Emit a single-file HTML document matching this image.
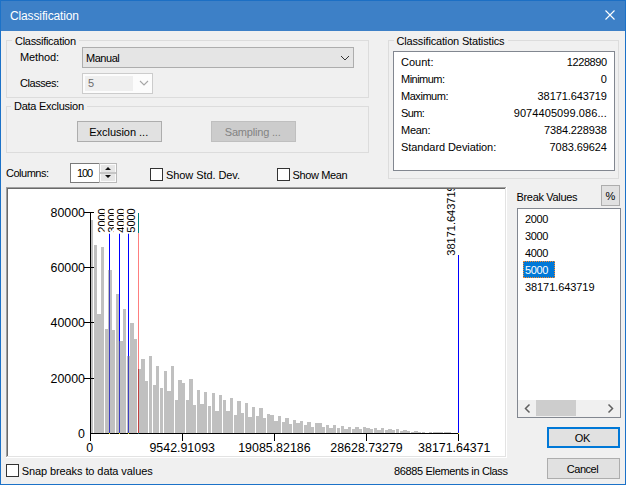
<!DOCTYPE html>
<html><head><meta charset="utf-8"><style>
html,body{margin:0;padding:0;}
body{width:626px;height:485px;position:relative;overflow:hidden;background:#f0f0f0;font-family:"Liberation Sans",sans-serif;}
body>div,body>svg{position:absolute;}
.t{white-space:nowrap;line-height:0;height:0;}
.t span{display:inline-block;line-height:0;}
svg text{font-family:"Liberation Sans",sans-serif;fill:#000;}
</style></head><body>
<div style="left:0px;top:0px;width:626px;height:31px;background:#3d80c7;"></div><div style="left:0px;top:0px;width:626px;height:1px;background:#1c6fc4;"></div><div style="left:0px;top:0px;width:1px;height:485px;background:#1c72c8;"></div><div style="left:625px;top:0px;width:1px;height:485px;background:#1c72c8;"></div><div style="left:0px;top:484px;width:626px;height:1px;background:#1c72c8;"></div><div class="t" style="top:16px;font-size:12px;color:#fff;letter-spacing:-0.130px;left:10px;"><span>Classification</span></div><svg style="left:604px;top:9px" width="13" height="13"><path d="M1.5 1.5 L10.5 10.5 M10.5 1.5 L1.5 10.5" stroke="#fff" stroke-width="1.1" fill="none"/></svg><div style="left:6px;top:40px;width:363px;height:58px;border:1px solid #dcdcdc;box-sizing:border-box;"></div><div style="left:12px;top:39px;width:67px;height:3px;background:#f0f0f0;"></div><div class="t" style="top:41px;font-size:11px;color:#000;letter-spacing:-0.293px;left:15px;"><span>Classification</span></div><div class="t" style="top:57px;font-size:11px;color:#000;letter-spacing:-0.124px;left:20px;"><span>Method:</span></div><div style="left:82px;top:47px;width:272px;height:21px;background:#e5e5e5;border:1px solid #adadad;box-sizing:border-box;"></div><div class="t" style="top:58px;font-size:11px;color:#000;letter-spacing:-0.456px;left:86px;"><span>Manual</span></div><svg style="left:340px;top:55px" width="11" height="7"><path d="M1 1 L5 5 L9 1" stroke="#333" stroke-width="1" fill="none"/></svg><div class="t" style="top:83px;font-size:11px;color:#000;letter-spacing:-0.454px;left:20px;"><span>Classes:</span></div><div style="left:82px;top:73px;width:71px;height:21px;background:#fcfcfc;border:1px solid #cccccc;box-sizing:border-box;"></div><div style="left:85px;top:76px;width:48px;height:15px;background:#efefef;"></div><div class="t" style="top:83px;font-size:11px;color:#6d6d6d;left:88px;"><span>5</span></div><svg style="left:139px;top:80px" width="11" height="7"><path d="M1 1 L5 5 L9 1" stroke="#a6a6a6" stroke-width="1.1" fill="none"/></svg><div style="left:6px;top:106px;width:363px;height:47px;border:1px solid #dcdcdc;box-sizing:border-box;"></div><div style="left:11px;top:105px;width:76px;height:3px;background:#f0f0f0;"></div><div class="t" style="top:106px;font-size:11px;color:#000;letter-spacing:-0.259px;left:14px;"><span>Data Exclusion</span></div><div style="left:77px;top:121px;width:85px;height:21px;background:#e1e1e1;border:1px solid #adadad;box-sizing:border-box;"></div><div class="t" style="top:132px;font-size:11px;color:#000;letter-spacing:-0.025px;left:89.21px;"><span>Exclusion ...</span></div><div style="left:211px;top:121px;width:85px;height:21px;background:#cccccc;border:1px solid #bfbfbf;box-sizing:border-box;"></div><div class="t" style="top:132px;font-size:11px;color:#838383;letter-spacing:-0.189px;left:224.79px;"><span>Sampling ...</span></div><div style="left:388px;top:40px;width:231px;height:139px;border:1px solid #dcdcdc;box-sizing:border-box;"></div><div style="left:393.5px;top:39px;width:114px;height:3px;background:#f0f0f0;"></div><div class="t" style="top:41px;font-size:11px;color:#000;letter-spacing:-0.161px;left:396.5px;"><span>Classification Statistics</span></div><div style="left:393px;top:51px;width:222px;height:120px;background:#fff;border:1px solid #828790;box-sizing:border-box;"></div><div class="t" style="top:62px;font-size:11px;color:#000;letter-spacing:0.018px;left:401px;"><span>Count:</span></div><div class="t" style="top:62px;font-size:11px;color:#000;letter-spacing:-0.387px;left:566.69px;"><span>1228890</span></div><div class="t" style="top:79px;font-size:11px;color:#000;letter-spacing:-0.524px;left:401px;"><span>Minimum:</span></div><div class="t" style="top:79px;font-size:11px;color:#000;left:600.68px;"><span>0</span></div><div class="t" style="top:96px;font-size:11px;color:#000;letter-spacing:-0.461px;left:401px;"><span>Maximum:</span></div><div class="t" style="top:96px;font-size:11px;color:#000;letter-spacing:-0.096px;left:537.60px;"><span>38171.643719</span></div><div class="t" style="top:113px;font-size:11px;color:#000;letter-spacing:-0.625px;left:401px;"><span>Sum:</span></div><div class="t" style="top:113px;font-size:11px;color:#000;letter-spacing:0.078px;left:513.72px;"><span>9074405099.086...</span></div><div class="t" style="top:130px;font-size:11px;color:#000;letter-spacing:-0.268px;left:401px;"><span>Mean:</span></div><div class="t" style="top:130px;font-size:11px;color:#000;letter-spacing:-0.123px;left:543.92px;"><span>7384.228938</span></div><div class="t" style="top:147px;font-size:11px;color:#000;letter-spacing:-0.079px;left:401px;"><span>Standard Deviation:</span></div><div class="t" style="top:147px;font-size:11px;color:#000;letter-spacing:-0.091px;left:549.59px;"><span>7083.69624</span></div><div class="t" style="top:173px;font-size:11px;color:#000;letter-spacing:-0.494px;left:6px;"><span>Columns:</span></div><div style="left:70px;top:163px;width:47px;height:20px;background:#fff;border:1px solid #7a7a7a;box-sizing:border-box;border-right:none;"></div><div style="left:99px;top:163px;width:18px;height:20px;background:#fff;border:1px solid #b9b9b9;box-sizing:border-box;"></div><div class="t" style="top:173px;font-size:11px;color:#000;letter-spacing:-1.177px;left:77px;"><span>100</span></div><div style="left:100px;top:164px;width:16px;height:18px;background:#fbfbfb;"></div><div style="left:101px;top:165px;width:14px;height:7px;background:#e6e6e6;"></div><div style="left:101px;top:174px;width:14px;height:7px;background:#e6e6e6;"></div><div style="left:100px;top:172px;width:16px;height:2px;background:#c6c6c6;"></div><svg style="left:100px;top:164px" width="16" height="18"><path d="M5 6 L8 3 L11 6 Z M5 11 L8 14 L11 11 Z" fill="#111"/></svg><div style="left:150px;top:168px;width:13px;height:13px;background:#fff;border:1px solid #333;box-sizing:border-box;"></div><div class="t" style="top:175px;font-size:11px;color:#000;letter-spacing:-0.077px;left:166px;"><span>Show Std. Dev.</span></div><div style="left:277px;top:168px;width:13px;height:13px;background:#fff;border:1px solid #333;box-sizing:border-box;"></div><div class="t" style="top:175px;font-size:11px;color:#000;letter-spacing:-0.386px;left:292.5px;"><span>Show Mean</span></div><div style="left:6px;top:187px;width:501px;height:271px;background:#fff;"></div><div style="left:6px;top:187px;width:501px;height:1px;background:#a0a0a0;"></div><div style="left:6px;top:188px;width:500px;height:1px;background:#696969;"></div><div style="left:6px;top:187px;width:1px;height:271px;background:#a0a0a0;"></div><div style="left:7px;top:188px;width:1px;height:269px;background:#696969;"></div><div style="left:6px;top:457px;width:501px;height:1px;background:#ffffff;"></div><div style="left:7px;top:456px;width:499px;height:1px;background:#e3e3e3;"></div><div style="left:506px;top:187px;width:1px;height:271px;background:#ffffff;"></div><div style="left:505px;top:188px;width:1px;height:269px;background:#e3e3e3;"></div><svg style="left:0;top:0" width="626" height="485"><defs><clipPath id="cp"><rect x="8" y="189" width="497" height="267"/></clipPath></defs><g clip-path="url(#cp)"><g shape-rendering="crispEdges"><rect x="91" y="220" width="2" height="213" fill="#c0c0c0"/><rect x="94" y="245" width="3" height="188" fill="#c0c0c0"/><rect x="97" y="314" width="4" height="119" fill="#c0c0c0"/><rect x="101" y="247" width="3" height="186" fill="#c0c0c0"/><rect x="105" y="329" width="3" height="104" fill="#c0c0c0"/><rect x="108" y="270" width="4" height="163" fill="#c0c0c0"/><rect x="112" y="330" width="3" height="103" fill="#c0c0c0"/><rect x="116" y="294" width="3" height="139" fill="#c0c0c0"/><rect x="119" y="341" width="4" height="92" fill="#c0c0c0"/><rect x="123" y="309" width="3" height="124" fill="#c0c0c0"/><rect x="127" y="356" width="3" height="77" fill="#c0c0c0"/><rect x="130" y="323" width="4" height="110" fill="#c0c0c0"/><rect x="134" y="339" width="3" height="94" fill="#c0c0c0"/><rect x="138" y="369" width="3" height="64" fill="#c0c0c0"/><rect x="141" y="359" width="4" height="74" fill="#c0c0c0"/><rect x="145" y="381" width="3" height="52" fill="#c0c0c0"/><rect x="149" y="356" width="3" height="77" fill="#c0c0c0"/><rect x="153" y="385" width="3" height="48" fill="#c0c0c0"/><rect x="156" y="366" width="3" height="67" fill="#c0c0c0"/><rect x="160" y="388" width="3" height="45" fill="#c0c0c0"/><rect x="164" y="371" width="3" height="62" fill="#c0c0c0"/><rect x="167" y="391" width="4" height="42" fill="#c0c0c0"/><rect x="171" y="366" width="3" height="67" fill="#c0c0c0"/><rect x="175" y="400" width="3" height="33" fill="#c0c0c0"/><rect x="178" y="380" width="4" height="53" fill="#c0c0c0"/><rect x="182" y="383" width="3" height="50" fill="#c0c0c0"/><rect x="186" y="400" width="3" height="33" fill="#c0c0c0"/><rect x="189" y="379" width="4" height="54" fill="#c0c0c0"/><rect x="193" y="405" width="3" height="28" fill="#c0c0c0"/><rect x="197" y="390" width="3" height="43" fill="#c0c0c0"/><rect x="200" y="404" width="4" height="29" fill="#c0c0c0"/><rect x="204" y="392" width="3" height="41" fill="#c0c0c0"/><rect x="208" y="406" width="3" height="27" fill="#c0c0c0"/><rect x="212" y="393" width="3" height="40" fill="#c0c0c0"/><rect x="215" y="411" width="4" height="22" fill="#c0c0c0"/><rect x="219" y="395" width="3" height="38" fill="#c0c0c0"/><rect x="223" y="400" width="3" height="33" fill="#c0c0c0"/><rect x="226" y="411" width="4" height="22" fill="#c0c0c0"/><rect x="230" y="398" width="3" height="35" fill="#c0c0c0"/><rect x="234" y="415" width="3" height="18" fill="#c0c0c0"/><rect x="237" y="401" width="4" height="32" fill="#c0c0c0"/><rect x="241" y="413" width="3" height="20" fill="#c0c0c0"/><rect x="245" y="403" width="3" height="30" fill="#c0c0c0"/><rect x="248" y="417" width="4" height="16" fill="#c0c0c0"/><rect x="252" y="407" width="3" height="26" fill="#c0c0c0"/><rect x="256" y="416" width="3" height="17" fill="#c0c0c0"/><rect x="259" y="408" width="4" height="25" fill="#c0c0c0"/><rect x="263" y="418" width="3" height="15" fill="#c0c0c0"/><rect x="267" y="414" width="3" height="19" fill="#c0c0c0"/><rect x="270" y="415" width="4" height="18" fill="#c0c0c0"/><rect x="274" y="421" width="4" height="12" fill="#c0c0c0"/><rect x="278" y="416" width="3" height="17" fill="#c0c0c0"/><rect x="282" y="422" width="3" height="11" fill="#c0c0c0"/><rect x="285" y="418" width="4" height="15" fill="#c0c0c0"/><rect x="289" y="424" width="3" height="9" fill="#c0c0c0"/><rect x="293" y="420" width="3" height="13" fill="#c0c0c0"/><rect x="296" y="423" width="4" height="10" fill="#c0c0c0"/><rect x="300" y="421" width="3" height="12" fill="#c0c0c0"/><rect x="304" y="425" width="3" height="8" fill="#c0c0c0"/><rect x="307" y="422" width="4" height="11" fill="#c0c0c0"/><rect x="311" y="427" width="3" height="6" fill="#c0c0c0"/><rect x="315" y="423" width="3" height="10" fill="#c0c0c0"/><rect x="318" y="423" width="4" height="10" fill="#c0c0c0"/><rect x="322" y="427" width="3" height="6" fill="#c0c0c0"/><rect x="326" y="425" width="3" height="8" fill="#c0c0c0"/><rect x="329" y="428" width="4" height="5" fill="#c0c0c0"/><rect x="333" y="425" width="3" height="8" fill="#c0c0c0"/><rect x="337" y="428" width="3" height="5" fill="#c0c0c0"/><rect x="341" y="426" width="3" height="7" fill="#c0c0c0"/><rect x="344" y="429" width="4" height="4" fill="#c0c0c0"/><rect x="348" y="427" width="3" height="6" fill="#c0c0c0"/><rect x="352" y="429" width="3" height="4" fill="#c0c0c0"/><rect x="355" y="427" width="4" height="6" fill="#c0c0c0"/><rect x="359" y="429" width="3" height="4" fill="#c0c0c0"/><rect x="363" y="427" width="3" height="6" fill="#c0c0c0"/><rect x="366" y="428" width="4" height="5" fill="#c0c0c0"/><rect x="370" y="429" width="3" height="4" fill="#c0c0c0"/><rect x="374" y="428" width="3" height="5" fill="#c0c0c0"/><rect x="377" y="430" width="4" height="3" fill="#c0c0c0"/><rect x="381" y="428" width="3" height="5" fill="#c0c0c0"/><rect x="385" y="430" width="3" height="3" fill="#c0c0c0"/><rect x="388" y="429" width="4" height="4" fill="#c0c0c0"/><rect x="392" y="430" width="3" height="3" fill="#c0c0c0"/><rect x="396" y="429" width="3" height="4" fill="#c0c0c0"/><rect x="400" y="431" width="3" height="2" fill="#c0c0c0"/><rect x="403" y="430" width="4" height="3" fill="#c0c0c0"/><rect x="407" y="431" width="3" height="2" fill="#c0c0c0"/><rect x="411" y="432" width="3" height="1" fill="#c0c0c0"/><rect x="414" y="431" width="4" height="2" fill="#c0c0c0"/><rect x="418" y="432" width="3" height="1" fill="#c0c0c0"/><rect x="422" y="432" width="3" height="1" fill="#c0c0c0"/><rect x="429" y="432" width="3" height="1" fill="#c0c0c0"/><rect x="433" y="432" width="3" height="1" fill="#c0c0c0"/><rect x="436" y="432" width="4" height="1" fill="#c0c0c0"/><rect x="440" y="432" width="3" height="1" fill="#c0c0c0"/><rect x="444" y="432" width="3" height="1" fill="#c0c0c0"/><rect x="447" y="432" width="4" height="1" fill="#c0c0c0"/><rect x="90" y="212" width="1" height="229" fill="#000"/><rect x="90" y="433" width="369" height="1" fill="#000"/><rect x="84" y="212" width="10" height="1" fill="#000"/><rect x="84" y="267" width="10" height="1" fill="#000"/><rect x="84" y="322" width="10" height="1" fill="#000"/><rect x="84" y="378" width="10" height="1" fill="#000"/><rect x="90" y="433" width="1" height="8" fill="#000"/><rect x="182" y="433" width="1" height="8" fill="#000"/><rect x="274" y="433" width="1" height="8" fill="#000"/><rect x="366" y="433" width="1" height="8" fill="#000"/><rect x="458" y="433" width="1" height="8" fill="#000"/><rect x="109" y="233" width="1" height="37" fill="#0000ff"/><rect x="109" y="270" width="1" height="163" fill="#3f3fc0"/><rect x="119" y="233" width="1" height="108" fill="#0000ff"/><rect x="119" y="341" width="1" height="92" fill="#3f3fc0"/><rect x="128" y="233" width="1" height="123" fill="#0000ff"/><rect x="128" y="356" width="1" height="77" fill="#3f3fc0"/><rect x="138" y="233" width="1" height="136" fill="#ff7f7f"/><rect x="138" y="369" width="1" height="64" fill="#c04040"/><rect x="138" y="213" width="1" height="20" fill="#008080"/><rect x="458" y="255" width="1" height="178" fill="#0000ff"/><rect x="109" y="433" width="1" height="1" fill="#ffff00"/><rect x="119" y="433" width="1" height="1" fill="#ffff00"/><rect x="128" y="433" width="1" height="1" fill="#ffff00"/><rect x="458" y="433" width="1" height="1" fill="#ffff00"/><rect x="138" y="433" width="1" height="1" fill="#008080"/></g><text x="85" y="216.5" text-anchor="end" font-size="12.4">80000</text><text x="85" y="271.5" text-anchor="end" font-size="12.4">60000</text><text x="85" y="326.5" text-anchor="end" font-size="12.4">40000</text><text x="85" y="382.5" text-anchor="end" font-size="12.4">20000</text><text x="85" y="437.5" text-anchor="end" font-size="12.4">0</text><text x="89.6" y="452" text-anchor="middle" font-size="12.4">0</text><text x="182.2" y="452" text-anchor="middle" font-size="12.4">9542.91093</text><text x="274.4" y="452" text-anchor="middle" font-size="12.4">19085.82186</text><text x="366.5" y="452" text-anchor="middle" font-size="12.4">28628.73279</text><text x="454.3" y="452" text-anchor="middle" font-size="12.4">38171.64371</text><g transform="translate(106,220.5) rotate(-90)"><rect x="-13.2354375" y="-11.3" width="26.470875" height="13.8" fill="#fff"/><text x="0" y="0" text-anchor="middle" font-size="11">2000</text></g><g transform="translate(116,220.5) rotate(-90)"><rect x="-13.2354375" y="-11.3" width="26.470875" height="13.8" fill="#fff"/><text x="0" y="0" text-anchor="middle" font-size="11">3000</text></g><g transform="translate(125,220.5) rotate(-90)"><rect x="-13.2354375" y="-11.3" width="26.470875" height="13.8" fill="#fff"/><text x="0" y="0" text-anchor="middle" font-size="11">4000</text></g><g transform="translate(135,220.5) rotate(-90)"><rect x="-13.2354375" y="-11.3" width="26.470875" height="13.8" fill="#fff"/><text x="0" y="0" text-anchor="middle" font-size="11">5000</text></g><g transform="translate(455,220.5) rotate(-90)"><rect x="-36.1755078125" y="-11.3" width="72.351015625" height="13.8" fill="#fff"/><text x="0" y="0" text-anchor="middle" font-size="11">38171.643719</text></g></g></svg><div class="t" style="top:197px;font-size:11px;color:#000;letter-spacing:-0.328px;left:516.5px;"><span>Break Values</span></div><div style="left:601px;top:185px;width:19px;height:21px;background:#e1e1e1;border:1px solid #adadad;box-sizing:border-box;"></div><div class="t" style="top:196px;font-size:11px;color:#000;left:605.61px;"><span>%</span></div><div style="left:517px;top:208px;width:104px;height:210px;background:#fff;border:1px solid #828790;box-sizing:border-box;"></div><div class="t" style="top:219px;font-size:11px;color:#000;letter-spacing:-0.390px;left:525px;"><span>2000</span></div><div class="t" style="top:236px;font-size:11px;color:#000;letter-spacing:-0.390px;left:525px;"><span>3000</span></div><div class="t" style="top:253px;font-size:11px;color:#000;letter-spacing:-0.390px;left:525px;"><span>4000</span></div><div style="left:523px;top:261px;width:32px;height:17px;background:#0078d7;border:1px dotted #fff;box-sizing:border-box;outline:1px dotted #ff8a2a;outline-offset:-1px;"></div><div class="t" style="top:270px;font-size:11px;color:#fff;letter-spacing:-0.390px;left:525px;"><span>5000</span></div><div class="t" style="top:287px;font-size:11px;color:#000;letter-spacing:-0.077px;left:525px;"><span>38171.643719</span></div><div style="left:518px;top:400px;width:102px;height:17px;background:#f0f0f0;"></div><div style="left:536px;top:400px;width:40px;height:16px;background:#cdcdcd;"></div><svg style="left:518px;top:400px" width="102" height="17"><path d="M11.5 4.5 L7.5 8.5 L11.5 12.5 M90.5 4.5 L94.5 8.5 L90.5 12.5" stroke="#606060" stroke-width="1.5" fill="none"/></svg><div style="left:6px;top:464px;width:13px;height:13px;background:#fff;border:1px solid #333;box-sizing:border-box;"></div><div class="t" style="top:471px;font-size:11px;color:#000;letter-spacing:-0.092px;left:21.7px;"><span>Snap breaks to data values</span></div><div class="t" style="top:471px;font-size:11px;color:#000;letter-spacing:-0.349px;left:394px;"><span>86885 Elements in Class</span></div><div style="left:547px;top:427px;width:73px;height:21px;background:#e1e1e1;border:2px solid #0078d7;box-sizing:border-box;"></div><div class="t" style="top:438px;font-size:11px;color:#000;letter-spacing:-0.300px;left:574.85px;"><span>OK</span></div><div style="left:547px;top:458px;width:73px;height:21px;background:#e1e1e1;border:1px solid #adadad;box-sizing:border-box;"></div><div class="t" style="top:469px;font-size:11px;color:#000;letter-spacing:-0.448px;left:566.72px;"><span>Cancel</span></div>
</body></html>
